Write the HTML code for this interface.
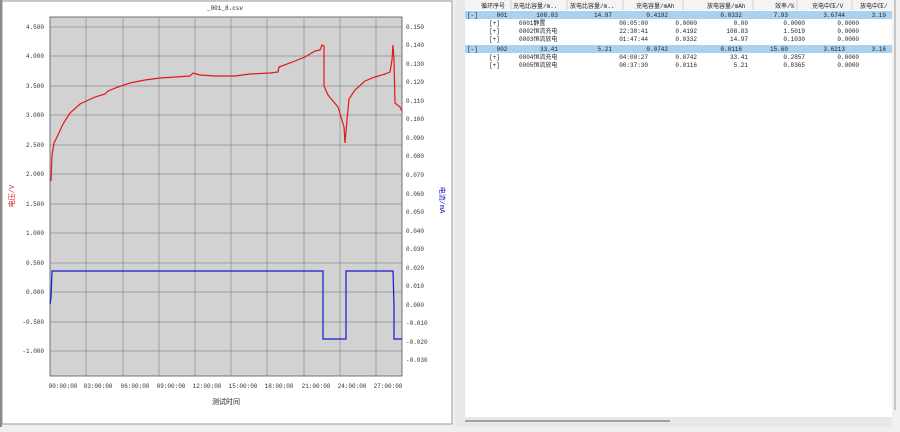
<!DOCTYPE html>
<html><head><meta charset="utf-8"><style>
body{margin:0;width:900px;height:427px;overflow:hidden;background:#f0f0f0;font-family:"Liberation Mono","Noto Sans CJK SC",monospace;}
svg text{font-family:"Liberation Mono","Noto Sans CJK SC",monospace;}
</style></head><body>
<svg width="900" height="427" viewBox="0 0 900 427" xmlns="http://www.w3.org/2000/svg">
<rect x="0" y="0" width="900" height="427" fill="#f0f0f0"/>
<rect x="2" y="1" width="450" height="423" fill="#fff" stroke="#9a9a9a" stroke-width="1"/>
<rect x="0" y="0" width="2" height="427" fill="#8a8a8a"/>
<text x="225" y="10" font-size="6" text-anchor="middle" fill="#222">_001_8.csv</text>
<rect x="50" y="17" width="352" height="359" fill="#d2d2d2" stroke="#555" stroke-width="0.8"/>
<g stroke="#8c8c8c" stroke-width="0.7">
<line x1="86" y1="17" x2="86" y2="376"/><line x1="123" y1="17" x2="123" y2="376"/><line x1="159" y1="17" x2="159" y2="376"/><line x1="195" y1="17" x2="195" y2="376"/><line x1="231" y1="17" x2="231" y2="376"/><line x1="267" y1="17" x2="267" y2="376"/><line x1="304" y1="17" x2="304" y2="376"/><line x1="340" y1="17" x2="340" y2="376"/><line x1="376" y1="17" x2="376" y2="376"/>
<line x1="50" y1="27" x2="402" y2="27"/><line x1="50" y1="56" x2="402" y2="56"/><line x1="50" y1="86" x2="402" y2="86"/><line x1="50" y1="115" x2="402" y2="115"/><line x1="50" y1="145" x2="402" y2="145"/><line x1="50" y1="174" x2="402" y2="174"/><line x1="50" y1="204" x2="402" y2="204"/><line x1="50" y1="233" x2="402" y2="233"/><line x1="50" y1="263" x2="402" y2="263"/><line x1="50" y1="292" x2="402" y2="292"/><line x1="50" y1="322" x2="402" y2="322"/><line x1="50" y1="351" x2="402" y2="351"/>
</g>
<g font-size="6" fill="#333" text-anchor="end">
<text x="44" y="29">4.500</text><text x="44" y="58">4.000</text><text x="44" y="88">3.500</text><text x="44" y="117">3.000</text><text x="44" y="147">2.500</text><text x="44" y="176">2.000</text><text x="44" y="206">1.500</text><text x="44" y="235">1.000</text><text x="44" y="265">0.500</text><text x="44" y="294">0.000</text><text x="44" y="324">-0.500</text><text x="44" y="353">-1.000</text>
</g>
<g font-size="6" fill="#333">
<text x="406" y="29">0.150</text><text x="406" y="47">0.140</text><text x="406" y="66">0.130</text><text x="406" y="84">0.120</text><text x="406" y="103">0.110</text><text x="406" y="121">0.100</text><text x="406" y="140">0.090</text><text x="406" y="158">0.080</text><text x="406" y="177">0.070</text><text x="406" y="196">0.060</text><text x="406" y="214">0.050</text><text x="406" y="233">0.040</text><text x="406" y="251">0.030</text><text x="406" y="270">0.020</text><text x="406" y="288">0.010</text><text x="406" y="307">0.000</text><text x="406" y="325">-0.010</text><text x="406" y="344">-0.020</text><text x="406" y="362">-0.030</text>
</g>
<g font-size="6" fill="#333" text-anchor="middle">
<text x="63" y="388">00:00:00</text><text x="98" y="388">03:00:00</text><text x="135" y="388">06:00:00</text><text x="171" y="388">09:00:00</text><text x="207" y="388">12:00:00</text><text x="243" y="388">15:00:00</text><text x="279" y="388">18:00:00</text><text x="316" y="388">21:00:00</text><text x="352" y="388">24:00:00</text><text x="388" y="388">27:00:00</text>
</g>
<text x="226" y="404" font-size="7" text-anchor="middle" fill="#222">测试时间</text>
<text transform="translate(14,196) rotate(-90)" font-size="7" text-anchor="middle" fill="#d02020">电压/V</text>
<text transform="translate(440,200) rotate(90)" font-size="7" text-anchor="middle" fill="#2020c0">电流/mA</text>
<polyline fill="none" stroke="#e01818" stroke-width="1.2" points="51,181 52,155 54,143 58,135 63,124 70,113 80,104 95,97 105,94 108,91 118,87 130,83 145,80 160,78 175,77 190,76 193,73 200,75 215,76 235,76 250,74 270,73 278,72 279,67 290,63 305,57 315,51 320,50 322,45 324,46 324,86 328,95 338,107 344,127 345,143 347,120 349,99 355,90 365,81 375,77 385,74 390,72 392,60 393,45 394,60 395,103 400,107 402,111"/>
<polyline fill="none" stroke="#1818d0" stroke-width="1.2" points="50,304 51,298 52,271 323,271 323,339 346,339 346,271 393,271 394,306 394,339 402,339"/>
<rect x="455" y="0" width="445" height="427" fill="#e8e8e8"/>
<rect x="465" y="0" width="427" height="417" fill="#fff"/>
<rect x="892" y="0" width="8" height="427" fill="#f0f0f0"/>
<line x1="895" y1="0" x2="895" y2="410" stroke="#888" stroke-width="0.8"/>
<line x1="465" y1="421" x2="670" y2="421" stroke="#777" stroke-width="1.2"/>
<rect x="465" y="0" width="427" height="10" fill="#f4f4f4"/>
<g stroke="#bbb" stroke-width="0.6"><line x1="511" y1="0" x2="511" y2="10"/><line x1="567" y1="0" x2="567" y2="10"/><line x1="623" y1="0" x2="623" y2="10"/><line x1="683" y1="0" x2="683" y2="10"/><line x1="753" y1="0" x2="753" y2="10"/><line x1="797" y1="0" x2="797" y2="10"/><line x1="852" y1="0" x2="852" y2="10"/></g>
<g font-size="6" fill="#222">
<text x="481" y="8">循环序号</text><text x="513" y="8">充电比容量/m..</text><text x="570" y="8">放电比容量/m..</text><text x="636" y="8">充电容量/mAh</text><text x="707" y="8">放电容量/mAh</text><text x="775" y="8">效率/%</text><text x="812" y="8">充电中压/V</text><text x="860" y="8">放电中压/</text>
</g>
<rect x="465" y="11" width="427" height="8" fill="#a8d2f2"/>
<rect x="465" y="45" width="427" height="8" fill="#a8d2f2"/>
<g font-size="6" fill="#222">
<text x="467" y="17">[-]</text><text x="502" y="17" text-anchor="middle">001</text>
<g text-anchor="end"><text x="558" y="17">108.83</text><text x="612" y="17">14.97</text><text x="668" y="17">0.4192</text><text x="742" y="17">0.0332</text><text x="788" y="17">7.93</text><text x="845" y="17">3.6744</text><text x="886" y="17">3.19</text></g>
<text x="489" y="25">[+]</text><text x="519" y="25">0001静置</text>
<g text-anchor="end"><text x="648" y="25">00:05:00</text><text x="697" y="25">0.0000</text><text x="748" y="25">0.00</text><text x="805" y="25">0.0000</text><text x="859" y="25">0.0000</text></g>
<text x="489" y="33">[+]</text><text x="519" y="33">0002恒流充电</text>
<g text-anchor="end"><text x="648" y="33">22:38:41</text><text x="697" y="33">0.4192</text><text x="748" y="33">108.83</text><text x="805" y="33">1.5019</text><text x="859" y="33">0.0000</text></g>
<text x="489" y="41">[+]</text><text x="519" y="41">0003恒流放电</text>
<g text-anchor="end"><text x="648" y="41">01:47:44</text><text x="697" y="41">0.0332</text><text x="748" y="41">14.97</text><text x="805" y="41">0.1030</text><text x="859" y="41">0.0000</text></g>
<text x="467" y="51">[-]</text><text x="502" y="51" text-anchor="middle">002</text>
<g text-anchor="end"><text x="558" y="51">33.41</text><text x="612" y="51">5.21</text><text x="668" y="51">0.0742</text><text x="742" y="51">0.0116</text><text x="788" y="51">15.60</text><text x="845" y="51">3.6213</text><text x="886" y="51">3.16</text></g>
<text x="489" y="59">[+]</text><text x="519" y="59">0004恒流充电</text>
<g text-anchor="end"><text x="648" y="59">04:00:27</text><text x="697" y="59">0.0742</text><text x="748" y="59">33.41</text><text x="805" y="59">0.2857</text><text x="859" y="59">0.0000</text></g>
<text x="489" y="67">[+]</text><text x="519" y="67">0005恒流放电</text>
<g text-anchor="end"><text x="648" y="67">00:37:30</text><text x="697" y="67">0.0116</text><text x="748" y="67">5.21</text><text x="805" y="67">0.0365</text><text x="859" y="67">0.0000</text></g>
</g>
</svg>
</body></html>
